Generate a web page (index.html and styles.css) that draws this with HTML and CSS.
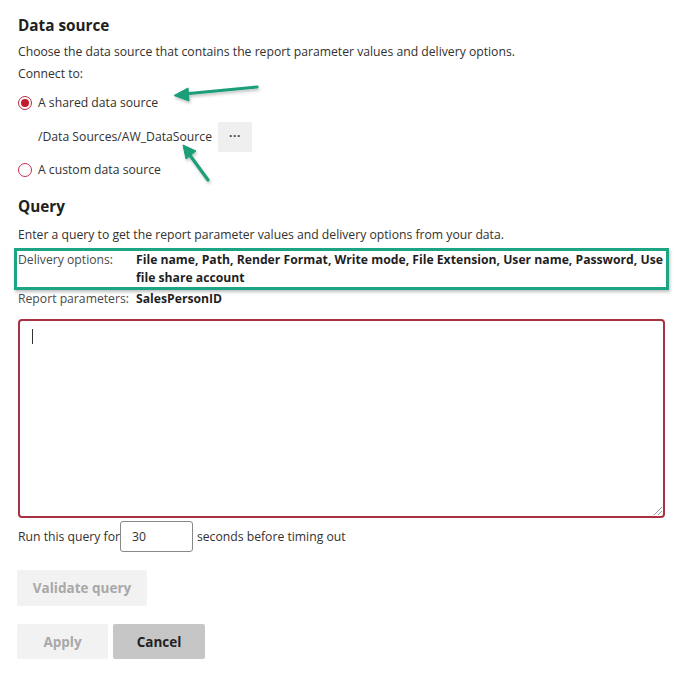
FILE: index.html
```html
<!DOCTYPE html>
<html lang="en">
<head>
<meta charset="utf-8">
<title>Data source</title>
<link rel="stylesheet" href="styles.css">
</head>
<body>
<div class="page">
  <h2 class="heading first">Data source</h2>
  <p class="text desc">Choose the data source that contains the report parameter values and delivery options.</p>
  <p class="text connect">Connect to:</p>
  <label class="radio-row shared">
    <span class="radio checked"></span>
    <span class="text">A shared data source</span>
  </label>
  <div class="path-row">
    <span class="text">/Data Sources/AW_DataSource</span>
    <button class="more-btn" type="button">···</button>
  </div>
  <label class="radio-row custom">
    <span class="radio"></span>
    <span class="text">A custom data source</span>
  </label>

  <h2 class="heading query-heading">Query</h2>
  <p class="text desc2">Enter a query to get the report parameter values and delivery options from your data.</p>
  <div class="highlight">
    <div class="field-row">
      <span class="field-label">Delivery options:</span>
      <span class="field-value">File name, Path, Render Format, Write mode, File Extension, User name, Password, Use file share account</span>
    </div>
  </div>
  <div class="field-row params">
    <span class="field-label">Report parameters:</span>
    <span class="field-value">SalesPersonID</span>
  </div>
  <div class="query-box"><span class="caret"></span><span class="grip"></span></div>
  <div class="timeout-row">
    <span class="text">Run this query for</span>
    <span class="num-input">30</span>
    <span class="text">seconds before timing out</span>
  </div>
  <button class="btn disabled validate" type="button">Validate query</button>
  <div class="actions">
    <button class="btn disabled apply" type="button">Apply</button>
    <button class="btn cancel" type="button">Cancel</button>
  </div>

  <svg class="arrows" width="697" height="676" viewBox="0 0 697 676">
    <defs>
      <filter id="sh" x="-20%" y="-20%" width="140%" height="140%">
        <feDropShadow dx="1" dy="2" stdDeviation="1.5" flood-color="#000" flood-opacity="0.25"/>
      </filter>
    </defs>
    <g filter="url(#sh)" fill="#1a9e78" stroke="#1a9e78">
      <line x1="257" y1="87" x2="184" y2="94" stroke-width="3.2" stroke-linecap="round"/>
      <polygon points="174,95.5 188,88 189,101" stroke-width="1" stroke-linejoin="round"/>
      <line x1="208" y1="180" x2="189" y2="154" stroke-width="3.2" stroke-linecap="round"/>
      <polygon points="183,145 196,151 186,159" stroke-width="1" stroke-linejoin="round"/>
    </g>
  </svg>
</div>
</body>
</html>
```

FILE: styles.css
```css
html, body {
  margin: 0;
  padding: 0;
  background: #ffffff;
}

body {
  font-family: "Open Sans", "Noto Sans", "Liberation Sans", sans-serif;
  color: #323130;
  font-size: 12.2px;
}

.page {
  position: relative;
  width: 697px;
  height: 676px;
  box-sizing: border-box;
  padding: 15px 0 0 18px;
}

.heading {
  margin: 0;
  font-size: 15.3px;
  line-height: 20px;
  font-weight: 700;
  color: #201f1e;
}

.query-heading {
  margin-top: 17px;
}

.text {
  margin: 0;
  line-height: 18px;
  white-space: nowrap;
}

.desc { margin-top: 8px; }
.connect { margin-top: 4px; }
.desc2 { margin-top: 10px; }

.radio-row {
  display: flex;
  align-items: center;
  gap: 6px;
  height: 18px;
}

.shared { margin-top: 11px; }
.custom { margin-top: 9px; }

.radio {
  width: 14px;
  height: 14px;
  box-sizing: border-box;
  border-radius: 50%;
  border: 1.5px solid #c4314b;
  background: #fff;
  position: relative;
}

.radio.checked {
  border-color: #b62a3e;
}

.radio.checked::after {
  content: "";
  position: absolute;
  left: 1.5px;
  top: 1.5px;
  width: 8px;
  height: 8px;
  border-radius: 50%;
  background: #c01c2e;
}

.path-row {
  display: flex;
  align-items: center;
  gap: 6px;
  margin-top: 10px;
  padding-left: 20px;
  height: 30px;
}

.more-btn {
  width: 34px;
  height: 30px;
  border: none;
  border-radius: 2px;
  background: #efefef;
  color: #444;
  font-family: inherit;
  font-size: 12px;
  font-weight: 700;
  letter-spacing: 0.5px;
  padding: 0 0 4px;
}

.highlight {
  margin: 4px 0 0 -4px;
  width: 655px;
  box-sizing: border-box;
  border: 3px solid #1ba585;
  padding: 0 0 0 1px;
  box-shadow: 1px 2px 3px rgba(0, 0, 0, 0.25);
}

.field-row {
  display: flex;
}

.field-label {
  flex: 0 0 118px;
  line-height: 18px;
  color: #4a4a4a;
}

.field-value {
  flex: 1;
  line-height: 18px;
  font-weight: 700;
  color: #1f1f1f;
}

.params {
  margin-top: 0;
}

.query-box {
  position: relative;
  margin-top: 11px;
  width: 647px;
  height: 199px;
  box-sizing: border-box;
  border: 2px solid #a73342;
  border-radius: 4px;
  background: #fff;
}

.caret {
  position: absolute;
  left: 12px;
  top: 8px;
  width: 1px;
  height: 15px;
  background: #333;
}

.grip {
  position: absolute;
  right: 1px;
  bottom: 1px;
  width: 8px;
  height: 8px;
  background: linear-gradient(135deg, transparent 45%, #999 45%, #999 52%, transparent 52%, transparent 70%, #999 70%, #999 77%, transparent 77%);
}

.timeout-row {
  display: flex;
  align-items: center;
  margin-top: 3px;
  height: 31px;
}

.num-input {
  width: 73px;
  height: 31px;
  box-sizing: border-box;
  border: 1px solid #8a8886;
  border-radius: 3px;
  padding-left: 11px;
  line-height: 29px;
  margin-right: 4px;
  margin-left: 0;
}

.btn {
  border: none;
  border-radius: 2px;
  font-family: inherit;
  font-size: 13.5px;
  font-weight: 700;
  padding: 0;
  display: block;
}

.disabled {
  background: #f2f2f2;
  color: #a8a8a8;
}

.validate {
  margin-top: 18px;
  width: 130px;
  height: 36px;
  margin-left: -1px;
}

.actions {
  display: flex;
  gap: 5px;
  margin-top: 18px;
  margin-left: -1px;
}

.apply {
  width: 91px;
  height: 35px;
}

.cancel {
  width: 92px;
  height: 35px;
  background: #c6c6c6;
  color: #222;
}

.arrows {
  position: absolute;
  left: 0;
  top: 0;
  pointer-events: none;
}
```
